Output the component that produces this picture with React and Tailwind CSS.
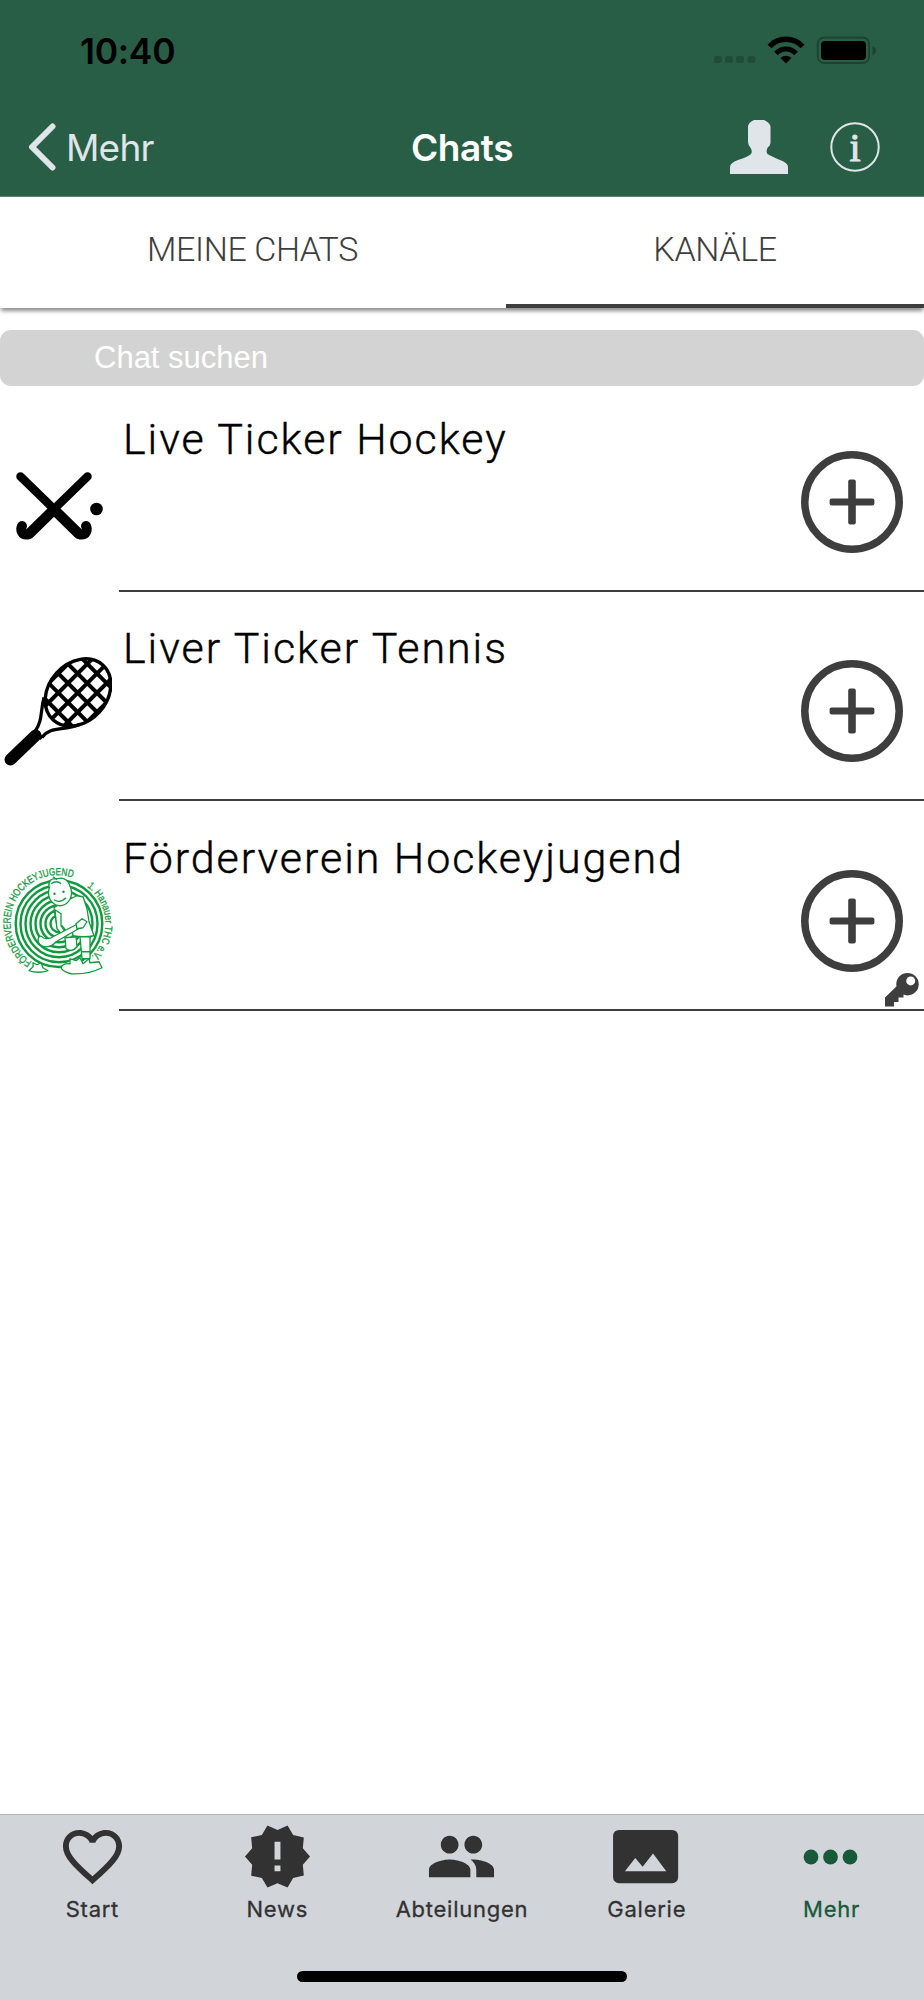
import React from "react";
import { MdFavoriteBorder, MdNewReleases, MdPeople } from "react-icons/md";

const HockeyIcon = () => (
  <svg width="112" height="112" viewBox="0 441 112 112" fill="none" stroke="#000" strokeLinecap="round" strokeLinejoin="round">
    <path d="M20.500 476.500L56 511M87.500 476.500L52 511" strokeWidth="8.500" />
    <path d="M54 509.500L78.500 533.500M54 509.500L29.500 533.500" strokeWidth="10.500" />
    <path d="M80 534.500Q84.500 535 86 532Q87.500 529 86 526" strokeWidth="10" />
    <path d="M28 534.500Q23.500 535 22 532Q20.500 529 22 526" strokeWidth="10" />
    <circle cx="96.500" cy="509" r="6.300" fill="#000" stroke="none" />
  </svg>
);

const RacketIcon = () => (
  <svg width="112" height="120" viewBox="0 646.500 112 120" fill="none" stroke="#000">
    <defs>
      <clipPath id="racket-head">
        <ellipse cx="78" cy="692" rx="37" ry="29" transform="rotate(-48 78 692)" />
      </clipPath>
    </defs>
    <ellipse cx="78" cy="692" rx="37" ry="29" transform="rotate(-48 78 692)" strokeWidth="3.400" />
    {/* strings, one line each way */}
    <g clipPath="url(#racket-head)" strokeWidth="4">
      {[576, 595.4, 614.7, 634, 653.4].map((c) => (
        <line key={c} x1="30" y1={c + 30} x2="130" y2={c + 130} />
      ))}
      {[731.3, 750.7, 770, 789.3, 808.6].map((s) => (
        <line key={s} x1="30" y1={s - 30} x2="130" y2={s - 130} />
      ))}
    </g>
    <path d="M44 697C40 712 43 719 35 731M80 724C62 731 51 725 42 737" strokeWidth="3.200" />
    <path d="M35.500 735L10.500 759" strokeWidth="12" strokeLinecap="round" />
    <path d="M34 730L42 738" strokeWidth="4" />
  </svg>
);

const FoerdervereinLogo = () => (
  <svg width="119" height="120" viewBox="0 856.250 119 120" fill="none" stroke="#109a3e" className="shrink-0">
    <defs>
      <path id="club-left" d="M32 962A46.500 46.500 0 0 1 83 883" />
      <path id="club-right" d="M87 887A46 46 0 0 1 90 958" />
    </defs>
    {[8.500, 13.500, 18.500, 23.500, 28.500, 33.500, 38.500, 43.300].map((r) => (
      <circle key={r} cx="59" cy="924" r={r} strokeWidth="2.400" />
    ))}
    <g fill="#109a3e" stroke="#109a3e" strokeWidth="0.300" fontFamily="Liberation Sans" fontSize="10.500">
      <text textLength="136" lengthAdjust="spacingAndGlyphs">
        <textPath href="#club-left" textLength="136" lengthAdjust="spacingAndGlyphs">FÖRDERVEREIN HOCKEYJUGEND</textPath>
      </text>
      <text textLength="79" lengthAdjust="spacingAndGlyphs">
        <textPath href="#club-right" textLength="79" lengthAdjust="spacingAndGlyphs">1. Hanauer THC e.V.</textPath>
      </text>
    </g>
    <g fill="#fff" strokeWidth="1.300" strokeLinejoin="round">
      <path d="M54 908L62 903L77 896L83 897L87 909L89 922L94 936Q84 938 73 936L72 929L66 931L62 926L57 928Z" />
      <path d="M55 910L57 929L64 937L66 934L61 926L61 914Z" />
      <path d="M65 938L66 949Q72 953 77 947L76 937Z" />
      <path d="M80 937L82 959L90 959L90 937ZM81 952L90 952" />
      <path d="M80 923L51 938Q44 940 42 937Q39 935 38 940Q38 945 44 947Q51 948 56 942L82 927Z" />
      <path d="M76 924L82 919L87 922L83 928L77 929Z" />
      <ellipse cx="60" cy="893" rx="11.500" ry="13" />
      <path d="M49 887Q48 878 57 879Q66 876 70 886M51 884Q57 880 61 884M57 880L53 877" />
      <path d="M54 900Q60 904 66 898" />
      <path d="M61 968Q63 963 70 964L70 959L76 961L80 958L83 964L89 959L90 963L99 962L102 968Q88 975 71 974Q63 972 61 968ZM29 971L33 967L33 963L37 965L41 963L43 968L48 971Q38 974 29 971Z" />
    </g>
    <circle cx="54.500" cy="894" r="1.200" fill="#109a3e" stroke="none" />
    <circle cx="63.500" cy="892" r="1.200" fill="#109a3e" stroke="none" />
  </svg>
);

const PlusCircle = () => (
  <svg width="104" height="104" viewBox="-52 -52 104 104" fill="#3e3e3e">
    <circle r="47.200" fill="none" stroke="#3e3e3e" strokeWidth="7.500" />
    <rect x="-22.400" y="-3.600" width="44.800" height="7.200" rx="2" />
    <rect x="-3.800" y="-22.400" width="7.600" height="44.800" rx="2" />
  </svg>
);

const KeyIcon = () => (
  <svg width="34" height="34" viewBox="0 0 34 34" fill="#3e3e3e">
    <path d="M0 24.500L13 12L22 21L18.500 21V24.500H13.500V29H9V33.500H0Z" />
    <circle cx="22.500" cy="11.200" r="11.200" />
    <circle cx="25.700" cy="7.900" r="4.500" fill="#fff" />
  </svg>
);

const channels = [
  { name: "Live Ticker Hockey", icon: <HockeyIcon /> },
  { name: "Liver Ticker Tennis", icon: <RacketIcon /> },
  { name: "Förderverein Hockeyjugend", icon: <FoerdervereinLogo />, locked: true },
];

const GalleryIcon = () => (
  <svg width="71" height="71" viewBox="0.300 0 24 24" fill="currentColor">
    <path fillRule="evenodd" d="M3 3H21A2 2 0 0 1 23 5V19A2 2 0 0 1 21 21H3A2 2 0 0 1 1 19V5A2 2 0 0 1 3 3ZM5 17H19L14.500 11L11 15.500L8.500 12.500Z" />
  </svg>
);

const MoreIcon = () => (
  <svg width="71" height="71" viewBox="0 0 71 71" fill="currentColor">
    <circle cx="15" cy="36" r="7.400" />
    <circle cx="34.500" cy="36" r="7.400" />
    <circle cx="54" cy="36" r="7.400" />
  </svg>
);

const navItems = [
  { label: "Start", icon: <MdFavoriteBorder size={71} /> },
  { label: "News", icon: <MdNewReleases size={71} /> },
  { label: "Abteilungen", icon: <MdPeople size={71} /> },
  { label: "Galerie", icon: <GalleryIcon /> },
  { label: "Mehr", icon: <MoreIcon />, active: true },
];

const App = () => {
  return (
    <div className="w-[924px] h-[2000px] flex flex-col bg-white overflow-hidden font-[Inter,sans-serif]">
      {/* ================= HEADER ================= */}
      <header className="h-[197px] shrink-0 bg-[#285e46] border-b border-[#5c8371]">
        <div className="h-[100px] flex items-center justify-between pt-[2px] pl-[80px] pr-[47px]">
          <span className="pt-px text-[35.5px] leading-none font-semibold tracking-[-0.3px]">10:40</span>
          <svg width="164" height="30" viewBox="713 36 164 30">
            <g fill="#224c3a">
              <rect x="714" y="56" width="8" height="7" rx="2.500" />
              <rect x="725" y="56" width="8" height="7" rx="2.500" />
              <rect x="736" y="56" width="8" height="7" rx="2.500" />
              <rect x="747.500" y="56" width="8" height="7" rx="2.500" />
            </g>
            <path d="M769.500 46.500A22.500 22.500 0 0 1 802.500 46.500" fill="none" stroke="#000" strokeWidth="5.500" />
            <path d="M776 53.500A13.500 13.500 0 0 1 796 53.500" fill="none" stroke="#000" strokeWidth="5" />
            <path d="M780.500 58Q786 53.500 791.500 58L786 63.500Z" />
            <rect x="817.700" y="37.500" width="51.500" height="25.500" rx="6.500" fill="none" stroke="#1c4231" strokeWidth="1.800" />
            <rect x="821" y="41" width="45" height="19" rx="4" />
            <path d="M872.500 46V55Q876 53.500 876 50.500Q876 47.500 872.500 46Z" fill="#1c4231" />
          </svg>
        </div>
        <div className="h-[94px] grid grid-cols-3 items-center">
          <div className="flex items-center pl-[28px] text-[#e0e5e9]">
            <svg width="28" height="48" viewBox="0 0 28 48" fill="none" stroke="currentColor" strokeWidth="6" strokeLinecap="round" strokeLinejoin="round">
              <path d="M24.500 3.500L4 24L24.500 44.500" />
            </svg>
            <span className="ml-[10px] text-[37px] leading-none tracking-[-0.8px]">Mehr</span>
          </div>
          <h1 className="text-center text-[37px] leading-none font-semibold tracking-[-0.4px] text-white">Chats</h1>
          <div className="flex items-center justify-end gap-[41px] pr-[44px] text-[#e0e5e9]">
            <svg width="59" height="54" viewBox="0 0 59 54" fill="currentColor">
              <path d="M24 0H34Q39 2 40.500 6V23Q40 26 38 27Q35.500 31 37.500 34Q41 36 50 40Q58 43 58 47V54H0V47Q0 43 8 40Q18 37 21 34Q23 31 20 27Q18.500 26 18 22V6Q19 2 24 0Z" />
            </svg>
            <svg width="50" height="50" viewBox="0 0 50 50">
              <circle cx="25" cy="25" r="23.700" fill="none" stroke="currentColor" strokeWidth="2" />
              <text x="25" y="38.500" textAnchor="middle" fontFamily="Liberation Serif" fontSize="40" fill="currentColor" stroke="currentColor" strokeWidth="1">i</text>
            </svg>
          </div>
        </div>
      </header>

      {/* ================= TABS ================= */}
      <div className="h-[111px] shrink-0 flex bg-white shadow-[0_4px_4px_-1px_rgba(0,0,0,0.45)] font-[Roboto,sans-serif] font-light text-[34px] text-[#3e3e3e]">
        <div className="w-[506px] flex items-center justify-center pr-[1px] pb-[7px] tracking-[-0.4px]">MEINE CHATS</div>
        <div className="flex-1 flex items-center justify-center border-b-4 border-[#3e3e3e] pb-[3px] tracking-[-0.4px]">KANÄLE</div>
      </div>

      {/* ================= SEARCH ================= */}
      <div className="mt-[22px] h-[56px] shrink-0 flex items-center rounded-[11px] bg-[#d3d3d3] pl-[94px] pt-px font-[Liberation_Sans,sans-serif] text-[31px] text-white">
        Chat suchen
      </div>

      {/* ================= CHANNELS ================= */}
      <main className="flex-1 -mt-[4px]">
        {channels.map((channel) => (
          <div key={channel.name} className="h-[209.7px] flex">
            <div className="w-[119px] pt-[20px] flex items-center">{channel.icon}</div>
            <div className="relative flex-1 flex justify-between border-b-2 border-[#3e3e3e]">
              <h2 className="pt-[31.5px] pl-[4px] font-[Roboto,sans-serif] font-light text-[43px] leading-[50px] tracking-[1.93px] text-black [-webkit-text-stroke:0.4px_black] whitespace-nowrap">
                {channel.name}
              </h2>
              <div className="pt-[67.5px] pr-[20px]">
                <PlusCircle />
              </div>
              {channel.locked && (
                <div className="absolute right-[5px] bottom-[2px]">
                  <KeyIcon />
                </div>
              )}
            </div>
          </div>
        ))}
      </main>

      {/* ================= BOTTOM NAV ================= */}
      <nav className="h-[186px] shrink-0 bg-[#d1d4d9] border-t border-[#b3b5b9] flex flex-col">
        <div className="grid grid-cols-5 pt-[6px] text-[#323232]">
          {navItems.map((item) => (
            <div key={item.label} className={`flex flex-col items-center ${item.active ? "text-[#18593a]" : ""}`}>
              {item.icon}
              <span className="mt-[3px] text-[22px] leading-[28px] font-normal tracking-[0.75px] [-webkit-text-stroke:0.3px_currentColor]">{item.label}</span>
            </div>
          ))}
        </div>
        <div className="mt-auto mb-[18px] mx-auto w-[330px] h-[11px] rounded-full bg-black" />
      </nav>
    </div>
  );
};

export default App;
